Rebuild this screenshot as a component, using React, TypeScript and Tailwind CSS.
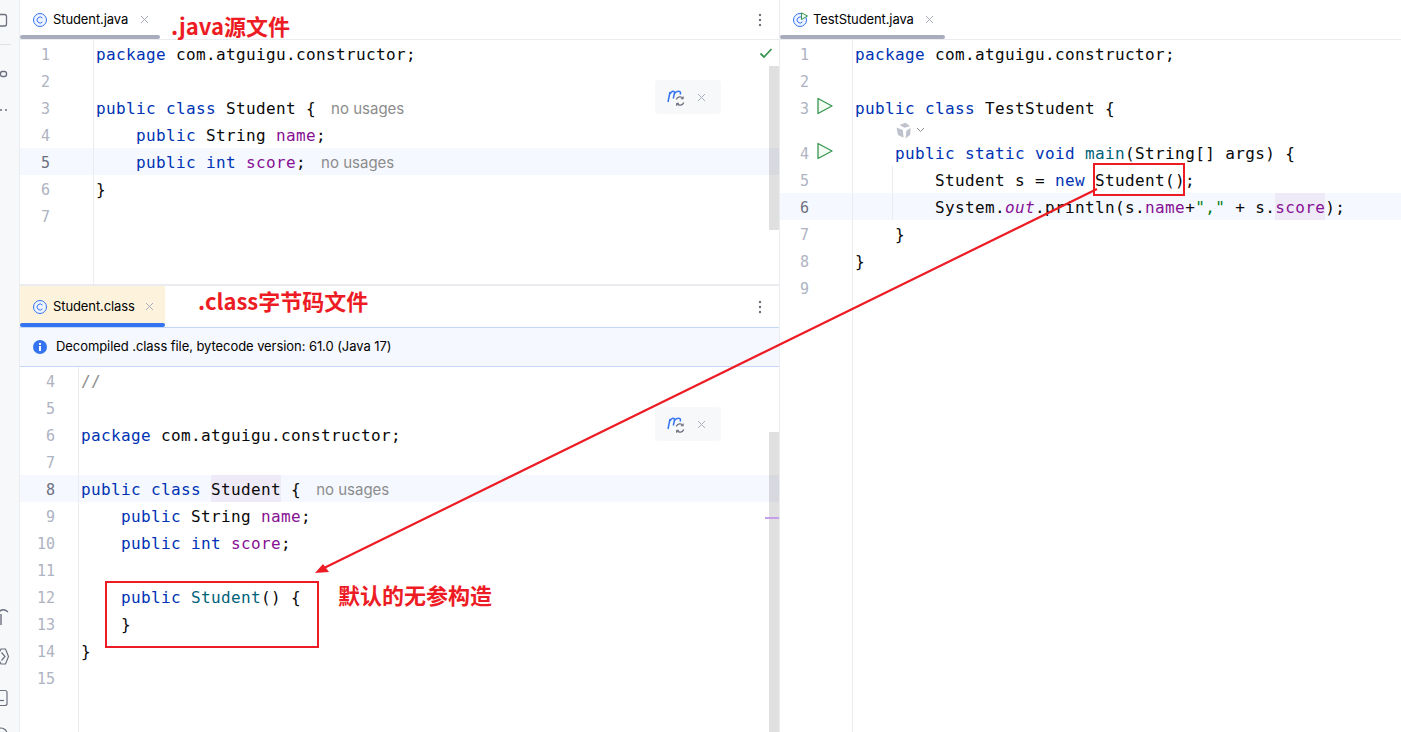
import React from "react";

const K = ({ children }: { children: React.ReactNode }) => <span className="text-[#0033b3]">{children}</span>;
const F = ({ children }: { children: React.ReactNode }) => <span className="text-[#871094]">{children}</span>;
const M = ({ children }: { children: React.ReactNode }) => <span className="text-[#00627a]">{children}</span>;
const Hl = ({ children }: { children: React.ReactNode }) => <span className="inline-block h-[27px] bg-[#efeaf8]">{children}</span>;
const Usages = () => (
  <span className="ml-[15px] tracking-normal text-[15px] text-[#8c8c8c] font-['Inter',sans-serif]">no usages</span>
);

function Run() {
  return (
    <svg className="absolute left-[36px] top-[3px]" width="18" height="18" viewBox="0 0 18 18">
      <path d="M2 1.5 L16 9 L2 16.5 Z" fill="#f2fcf3" stroke="#369650" strokeWidth="1.3" strokeLinejoin="round" />
    </svg>
  );
}

type LineProps = {
  n?: number;
  gutter: number;
  pr: number;
  active?: boolean;
  run?: boolean;
  guide?: boolean;
  h?: string;
  children?: React.ReactNode;
};

function Line({ n, gutter, pr, active, run, guide, h = "h-[27px]", children }: LineProps) {
  return (
    <div className={`flex shrink-0 ${h} ${active ? "bg-[#f5f8fe]" : ""}`}>
      <div
        className={`relative shrink-0 border-r border-[#ebecf0] text-right text-[15px] leading-[30px] ${active ? "text-[#6c707e]" : "text-[#aeb3c2]"}`}
        style={{ width: gutter, paddingRight: pr }}
      >
        {n}
        {run && <Run />}
      </div>
      <div className="relative flex-1 pl-[2px] whitespace-pre text-[16px] leading-[29px] tracking-[0.37px] text-[#080808]">
        {guide && <span className="absolute left-[39px] top-0 h-full w-px bg-[#ebecf0]" />}
        {children}
      </div>
    </div>
  );
}

function ClassIcon({ test }: { test?: boolean }) {
  return (
    <svg width="16" height="16" viewBox="0 0 16 16" className="shrink-0">
      <circle cx="8" cy="8" r="6.5" fill="#edf3ff" stroke="#3574f0" strokeWidth="1" />
      <path d="M10.4 6.1 A3 3 0 1 0 10.4 9.9" fill="none" stroke="#3574f0" strokeWidth="1" />
      {test && <path d="M9.5 0.8 L15.5 4 L9.5 7.5 Z" fill="#f2fcf3" stroke="#369650" strokeWidth="1" strokeLinejoin="round" />}
    </svg>
  );
}

function Close({ size = 9 }: { size?: number }) {
  return (
    <svg width={size} height={size} viewBox="0 0 9 9" className="shrink-0">
      <path d="M1 1 L8 8 M8 1 L1 8" stroke="#a8adbd" strokeWidth="1" />
    </svg>
  );
}

function Dots() {
  return (
    <svg width="4" height="14" viewBox="0 0 4 14" className="shrink-0">
      <circle cx="2" cy="2" r="1.2" fill="#6c707e" />
      <circle cx="2" cy="7" r="1.2" fill="#6c707e" />
      <circle cx="2" cy="12" r="1.2" fill="#6c707e" />
    </svg>
  );
}

function Tab({ name, test, active, w, gap }: { name: string; test?: boolean; active?: boolean; w: number; gap: number }) {
  return (
    <div
      className={`relative flex h-full items-center pl-[12px] ${active ? "bg-[#fdf3dc]" : ""}`}
      style={{ width: w }}
    >
      <ClassIcon test={test} />
      <span className="ml-[5px] text-[13px] tracking-[-0.1px] text-black font-['Inter',sans-serif]">{name}</span>
      <span style={{ marginLeft: gap }} className="flex">
        <Close />
      </span>
      <span className={`absolute bottom-0 left-0 right-0 h-[4px] rounded-[2px] ${active ? "bg-[#3574f0]" : "bg-[#a8adbd]"}`} />
    </div>
  );
}

function Floating({ top }: { top: string }) {
  return (
    <div className={`absolute left-[635px] ${top} flex h-[34px] w-[66px] items-center rounded-[4px] bg-[#f7f8fa]`}>
      <svg width="20" height="20" viewBox="0 0 20 20" className="ml-[12px]">
        <path d="M1 15 L3 5 M3 7 C4.5 3.5 7.5 3.5 7.5 6 L6.3 11.5 M7.5 6.5 C9.5 3.5 13.5 3.5 13.5 6 L13.2 7.5" fill="none" stroke="#3574f0" strokeWidth="1.5" />
        <path d="M9.3 12.5 A3.8 3.8 0 0 1 16 11.5 M16.7 15.5 A3.8 3.8 0 0 1 10 16.5" fill="none" stroke="#6c707e" strokeWidth="1.3" />
        <path d="M16.2 9.5 V11.8 H13.9 M9.6 18.8 V16.3 H12" fill="none" stroke="#6c707e" strokeWidth="1" />
      </svg>
      <span className="ml-[10px] flex">
        <Close />
      </span>
    </div>
  );
}

function Filler({ gutter }: { gutter: number }) {
  return (
    <div className="flex flex-1">
      <div className="border-r border-[#ebecf0]" style={{ width: gutter }} />
    </div>
  );
}

export default function App() {
  return (
    <div className="relative flex h-[732px] w-[1401px] overflow-hidden bg-white font-['DejaVu_Sans_Mono',monospace]">
      {/* tool strip */}
      <div className="flex w-[20px] shrink-0 flex-col border-r border-[#ebecf0] bg-[#f7f8fa]">
        <svg width="19" height="120" viewBox="0 0 19 120">
          <rect x="-5" y="14.5" width="11.5" height="11.5" rx="2" fill="none" stroke="#6c707e" strokeWidth="1.3" />
          <path d="M0 44.5 H11" stroke="#dfe1e5" />
          <rect x="0.5" y="71.5" width="6" height="5" rx="2" fill="none" stroke="#6c707e" strokeWidth="1.4" />
          <circle cx="1" cy="110" r="1" fill="#6c707e" />
          <circle cx="6" cy="110" r="1" fill="#6c707e" />
        </svg>
        <svg width="19" height="140" viewBox="0 0 19 140" className="mt-auto">
          <path d="M1 33 V22 M-3 24 Q1 14 8 20" fill="none" stroke="#6c707e" strokeWidth="1.4" />
          <path d="M-3 64.5 L1 57 L5.5 57 L8.5 64.5 L5.5 72 L1 72 Z M1.5 60.5 L5 64.5 L1.5 68.5" fill="none" stroke="#6c707e" strokeWidth="1.2" />
          <rect x="-5" y="98.5" width="12" height="15" rx="2" fill="none" stroke="#6c707e" strokeWidth="1.2" />
          <path d="M0 108.5 H4" stroke="#6c707e" strokeWidth="1.2" />
          <circle cx="1" cy="142" r="6" fill="none" stroke="#6c707e" strokeWidth="1.2" />
        </svg>
      </div>

      {/* left column */}
      <div className="flex w-[759px] shrink-0 flex-col">
        {/* top pane */}
        <div className="relative flex h-[284px] shrink-0 flex-col overflow-hidden">
          <div className="flex h-[40px] shrink-0 items-center justify-between border-b border-[#ebecf0] pr-[17px]">
            <Tab name="Student.java" w={140} gap={12} />
            <Dots />
          </div>
          <Line n={1} gutter={74} pr={43}><K>package</K> com.atguigu.constructor;</Line>
          <Line n={2} gutter={74} pr={43} />
          <Line n={3} gutter={74} pr={43}><K>public class</K> Student {"{"}<Usages /></Line>
          <Line n={4} gutter={74} pr={43}>{"    "}<K>public</K> String <F>name</F>;</Line>
          <Line n={5} gutter={74} pr={43} active>{"    "}<K>public int</K> <F>score</F>;<Usages /></Line>
          <Line n={6} gutter={74} pr={43}>{"}"}</Line>
          <Line n={7} gutter={74} pr={43} />
          <Filler gutter={74} />
          <svg className="absolute left-[739px] top-[47px]" width="14" height="12" viewBox="0 0 14 12">
            <path d="M1.5 6.5 L5 10 L12.5 2" fill="none" stroke="#369650" strokeWidth="1.8" />
          </svg>
          <div className="absolute right-0 top-[66px] h-[164px] w-[10px] bg-black/[.12]" />
          <Floating top="top-[80px]" />
        </div>

        <div className="h-[2px] shrink-0 bg-[#ebecf0]" />

        {/* bottom pane */}
        <div className="relative flex flex-1 flex-col overflow-hidden">
          <div className="flex h-[42px] shrink-0 items-center justify-between border-b border-[#c5d7f7] pr-[17px]">
            <Tab name="Student.class" active w={145} gap={10} />
            <Dots />
          </div>
          <div className="flex h-[39px] shrink-0 items-center border-b border-[#c5d7f7] bg-[#f5f8fe] pl-[13px]">
            <svg width="14" height="14" viewBox="0 0 14 14" className="shrink-0">
              <circle cx="7" cy="7" r="7" fill="#3574f0" />
              <rect x="6" y="6" width="2" height="5" fill="#fff" />
              <rect x="6" y="3" width="2" height="2" fill="#fff" />
            </svg>
            <span className="ml-[9px] text-[13px] tracking-[-0.07px] text-[#000] font-['Inter',sans-serif]">Decompiled .class file, bytecode version: 61.0 (Java 17)</span>
          </div>
          <Line n={4} gutter={59} pr={23}><span className="text-[#8c8c8c]">//</span></Line>
          <Line n={5} gutter={59} pr={23} />
          <Line n={6} gutter={59} pr={23}><K>package</K> com.atguigu.constructor;</Line>
          <Line n={7} gutter={59} pr={23} />
          <Line n={8} gutter={59} pr={23} active><K>public class</K> <Hl>Student</Hl> {"{"}<Usages /></Line>
          <Line n={9} gutter={59} pr={23}>{"    "}<K>public</K> String <F>name</F>;</Line>
          <Line n={10} gutter={59} pr={23}>{"    "}<K>public int</K> <F>score</F>;</Line>
          <Line n={11} gutter={59} pr={23} />
          <Line n={12} gutter={59} pr={23}>{"    "}<K>public</K> <M>Student</M>() {"{"}</Line>
          <Line n={13} gutter={59} pr={23}>{"    }"}</Line>
          <Line n={14} gutter={59} pr={23}>{"}"}</Line>
          <Line n={15} gutter={59} pr={23} />
          <Filler gutter={59} />
          <div className="absolute bottom-0 right-0 h-[300px] w-[10px] bg-black/[.12]" />
          <div className="absolute right-0 top-[231px] h-[2px] w-[14px] bg-[#c59fe8]" />
          <Floating top="top-[121px]" />
        </div>
      </div>

      {/* right column */}
      <div className="flex flex-1 flex-col border-l border-[#ebecf0]">
        <div className="flex h-[40px] shrink-0 items-center border-b border-[#ebecf0]">
          <Tab name="TestStudent.java" test w={165} gap={11} />
        </div>
        <Line n={1} gutter={73} pr={43}><K>package</K> com.atguigu.constructor;</Line>
        <Line n={2} gutter={73} pr={43} />
        <Line n={3} gutter={73} pr={43} run><K>public class</K> TestStudent {"{"}</Line>
        <Line gutter={73} pr={43} h="h-[18px]">
          <svg className="absolute left-[42px] top-[1px]" width="32" height="18" viewBox="0 0 32 18">
            <path d="M4.5 3 L10.5 0.8 L15 4.2 L9.5 5.8 Z" fill="#bfc2cc" />
            <path d="M15.6 6 L15.2 12.8 L10.5 16.4 L11.4 8.8 Z" fill="#bfc2cc" />
            <path d="M1.5 5.5 L7.8 8 L8.6 15.8 L3 13 Z" fill="#bfc2cc" />
            <path d="M22 6 L25.5 9.5 L29 6" fill="none" stroke="#8c8f9c" strokeWidth="1" />
          </svg>
        </Line>
        <Line n={4} gutter={73} pr={43} run>{"    "}<K>public static void</K> <M>main</M>(String[] args) {"{"}</Line>
        <Line n={5} gutter={73} pr={43} guide>{"        "}Student s = <K>new</K> Student();</Line>
        <Line n={6} gutter={73} pr={43} guide active>
          {"        "}System.<span className="italic text-[#871094]">out</span>.println(s.<F>name</F>+<span className="text-[#067d17]">","</span> + s.<Hl><F>score</F></Hl>);
        </Line>
        <Line n={7} gutter={73} pr={43}>{"    }"}</Line>
        <Line n={8} gutter={73} pr={43}>{"}"}</Line>
        <Line n={9} gutter={73} pr={43} />
        <Filler gutter={73} />
      </div>

      {/* hand-drawn annotations */}
      <svg className="pointer-events-none absolute left-0 top-0" width="1401" height="732" viewBox="0 0 1401 732">
        <path d="M1097 189 L322 569" stroke="#ed1c24" strokeWidth="2.2" />
        <path d="M315 573 L323 564 L329 572 Z" fill="#ed1c24" />
      </svg>
      <div className="absolute left-[1093px] top-[163px] h-[33px] w-[92px] border-2 border-[#ed1c24]" />
      <div className="absolute left-[105px] top-[581px] h-[67px] w-[214px] border-2 border-[#ed1c24]" />
      <span className="absolute left-[171px] top-[10px] text-[22px] leading-[31px] font-bold text-[#ed1c24] font-['Noto_Sans_CJK_SC',sans-serif]">.java源文件</span>
      <span className="absolute left-[198px] top-[285px] text-[22px] leading-[31px] font-bold text-[#ed1c24] font-['Noto_Sans_CJK_SC',sans-serif]">.class字节码文件</span>
      <span className="absolute left-[338px] top-[579px] text-[22px] leading-[31px] font-bold text-[#ed1c24] font-['Noto_Sans_CJK_SC',sans-serif]">默认的无参构造</span>
    </div>
  );
}
